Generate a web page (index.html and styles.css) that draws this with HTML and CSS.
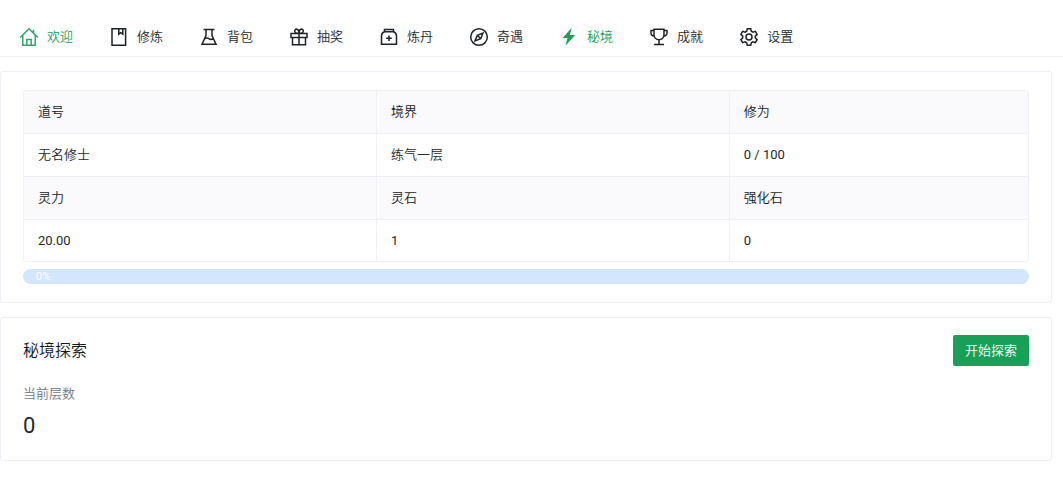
FILE: index.html
```html
<!DOCTYPE html>
<html lang="zh-CN">
<head>
<meta charset="utf-8">
<meta name="viewport" content="width=device-width, initial-scale=1">
<title>秘境探索</title>
<link rel="stylesheet" href="styles.css">
</head>
<body>
<nav class="menu">
  <a class="menu-item menu-item-home" href="#home">
    <svg class="icon" viewBox="0 0 20 20"><path d="M1.200 10.500 10 1.800l8.800 8.700M3.800 8.500v9.700h12.400V8.500M14.500 6V2.800M7.800 18v-5.500h4.400V18"/></svg>欢迎</a>
  <a class="menu-item" href="#cultivate">
    <svg class="icon" viewBox="0 0 20 20"><path d="M3 1.800h13.600v16.400H3zM9.800 2v5.200l2-1.500 2 1.500V2"/></svg>修炼</a>
  <a class="menu-item" href="#bag">
    <svg class="icon" viewBox="0 0 20 20"><path d="M4.500 2.500h11M7 2.500v6L3 17.200h14L13 8.500v-6M5.500 11.800c2-1.400 3.500-.8 4.700 0s2.800.7 4.300-.5"/><path d="M9.300 9h.1M10.500 6.500h.1"/></svg>背包</a>
  <a class="menu-item" href="#draw">
    <svg class="icon" viewBox="0 0 20 20"><path d="M2 6.500h16v4H2zM3.500 10.500v7.300h13v-7.300M10 6.500v11.300M10 6.300C7 6.300 5.700 5.400 5.700 4S7 1.900 8 2.200s2 1.800 2 4.100c0-2.300 1-3.800 2-4.100s2.300.4 2.300 1.800S13 6.300 10 6.300z"/></svg>抽奖</a>
  <a class="menu-item" href="#alchemy">
    <svg class="icon" viewBox="0 0 20 20"><path d="M5.500 2.500h9v2.300h-9zM5.500 4.800C3.500 5.500 2.500 7 2.500 9v8.200h15V9c0-2-1-3.500-3-4.200M10 8.500v5.500M7.200 11.300h5.600"/></svg>炼丹</a>
  <a class="menu-item" href="#encounter">
    <svg class="icon" viewBox="0 0 20 20"><circle cx="10" cy="10" r="8.300"/><path d="m14 6-2.300 5.700L6 14l2.300-5.700zM8.300 8.300l3.400 3.400"/></svg>奇遇</a>
  <a class="menu-item menu-item-active" href="#realm" aria-current="page">
    <svg class="icon" viewBox="0 0 20 20"><path class="solid" d="M12.600.8 3.700 11h4.800L6.600 18.500 16.200 8h-5.300z"/></svg>秘境</a>
  <a class="menu-item" href="#achievements">
    <svg class="icon" viewBox="0 0 20 20"><path d="M5 2.300h10v5.200c0 3-2 5.200-5 5.200s-5-2.200-5-5.200zM5 3.500H2v2.300c0 2 1.300 3.200 3.500 3.500M15 3.500h3v2.300c0 2-1.300 3.200-3.500 3.500M10 12.700v5M5 17.600h10"/></svg>成就</a>
  <a class="menu-item" href="#settings">
    <svg class="icon" viewBox="0 0 20 20"><circle cx="10" cy="10" r="3"/><path d="M8.300 1.700h3.400l.6 2.500 1.600.9 2.500-.7 1.700 2.900-1.800 1.800v1.800l1.800 1.800-1.700 2.900-2.500-.7-1.600.9-.6 2.500H8.300l-.6-2.500-1.600-.9-2.500.7-1.700-2.900 1.800-1.800V9.100L1.900 7.300l1.700-2.900 2.500.7 1.600-.9z"/></svg>设置</a>
</nav>
<main class="content">
  <section class="card">
    <table class="stats">
      <tr><th>道号</th><th>境界</th><th class="stats-last">修为</th></tr>
      <tr><td>无名修士</td><td>练气一层</td><td class="number">0 / 100</td></tr>
      <tr><th>灵力</th><th>灵石</th><th>强化石</th></tr>
      <tr><td class="number">20.00</td><td class="number">1</td><td class="number">0</td></tr>
    </table>
    <div class="progress" role="progressbar" aria-label="修为" aria-valuemin="0" aria-valuemax="100" aria-valuenow="0">0%</div>
  </section>
  <section class="card card-realm">
    <header class="card-header">
      <h1 class="card-title">秘境探索</h1>
      <button class="button" type="button">开始探索</button>
    </header>
    <dl class="statistic">
      <dt class="statistic-label">当前层数</dt>
      <dd class="statistic-value">0</dd>
    </dl>
  </section>
</main>
</body>
</html>
```

FILE: styles.css
```css
* {
  box-sizing: border-box;
}

body {
  margin: 0;
  background: #fff;
  color: #25282b;
  font: 350 13px/18px Roboto, "Noto Sans CJK SC", sans-serif;
}

.menu {
  display: flex;
  gap: 36px;
  padding: 17px 19px 0;
  border-bottom: 1px solid #efeff5;
}

.menu-item {
  display: flex;
  flex: none;
  align-items: center;
  gap: 8px;
  height: 39px;
  color: #25282b;
  text-decoration: none;
  white-space: nowrap;
}

.icon {
  width: 20px;
  height: 20px;
  fill: none;
  stroke: #1f2225;
  stroke-width: 1.5;
}

.menu-item-home,
.menu-item-active {
  color: #18a058;
}

.menu-item-home .icon {
  stroke: #36a36c;
}

.icon .solid {
  fill: #18a058;
  stroke: none;
}

.content {
  display: flex;
  flex-direction: column;
  gap: 14px;
  padding: 14px 11px 14px 0;
}

.card {
  padding: 18px 22px;
  border: 1px solid #efeff5;
  border-radius: 3px;
}

.card-realm {
  padding: 17px 22px;
}

.stats {
  width: 100%;
  table-layout: fixed;
  border: 1px solid #efeff5;
  border-radius: 3px;
  border-collapse: separate;
  border-spacing: 0;
  overflow: hidden;
}

.stats th,
.stats td {
  padding: 12px 14px;
  border-right: 1px solid #efeff5;
  border-bottom: 1px solid #efeff5;
  text-align: left;
  font-weight: inherit;
}

.stats th {
  background: #fafafc;
  color: #15181b;
}

.stats .number {
  font-weight: 400;
}

.stats .stats-last {
  width: 29.7%;
}

.stats tr > :last-child {
  border-right: 0;
}

.stats tr:last-child > td {
  padding-bottom: 11px;
  border-bottom: 0;
}

.progress {
  margin-top: 7px;
  padding: 0 13px;
  border-radius: 8px;
  background: #d2e6fe;
  color: #fff;
  font-size: 11px;
  font-weight: 400;
  line-height: 15px;
}

.card-header {
  display: flex;
  align-items: center;
  justify-content: space-between;
}

.card-title {
  margin: 0;
  color: #15181b;
  font-size: 16px;
  font-weight: inherit;
  line-height: 26px;
}

.button {
  height: 31px;
  padding: 0 12px;
  border: 0;
  border-radius: 2px;
  background: #18a058;
  color: #fff;
  font: inherit;
}

.statistic {
  margin: 19px 0 0;
}

.statistic-label {
  color: #70767c;
}

.statistic-value {
  margin: 5px 0 0;
  font-size: 22px;
  font-weight: 400;
  line-height: 35px;
}
```
